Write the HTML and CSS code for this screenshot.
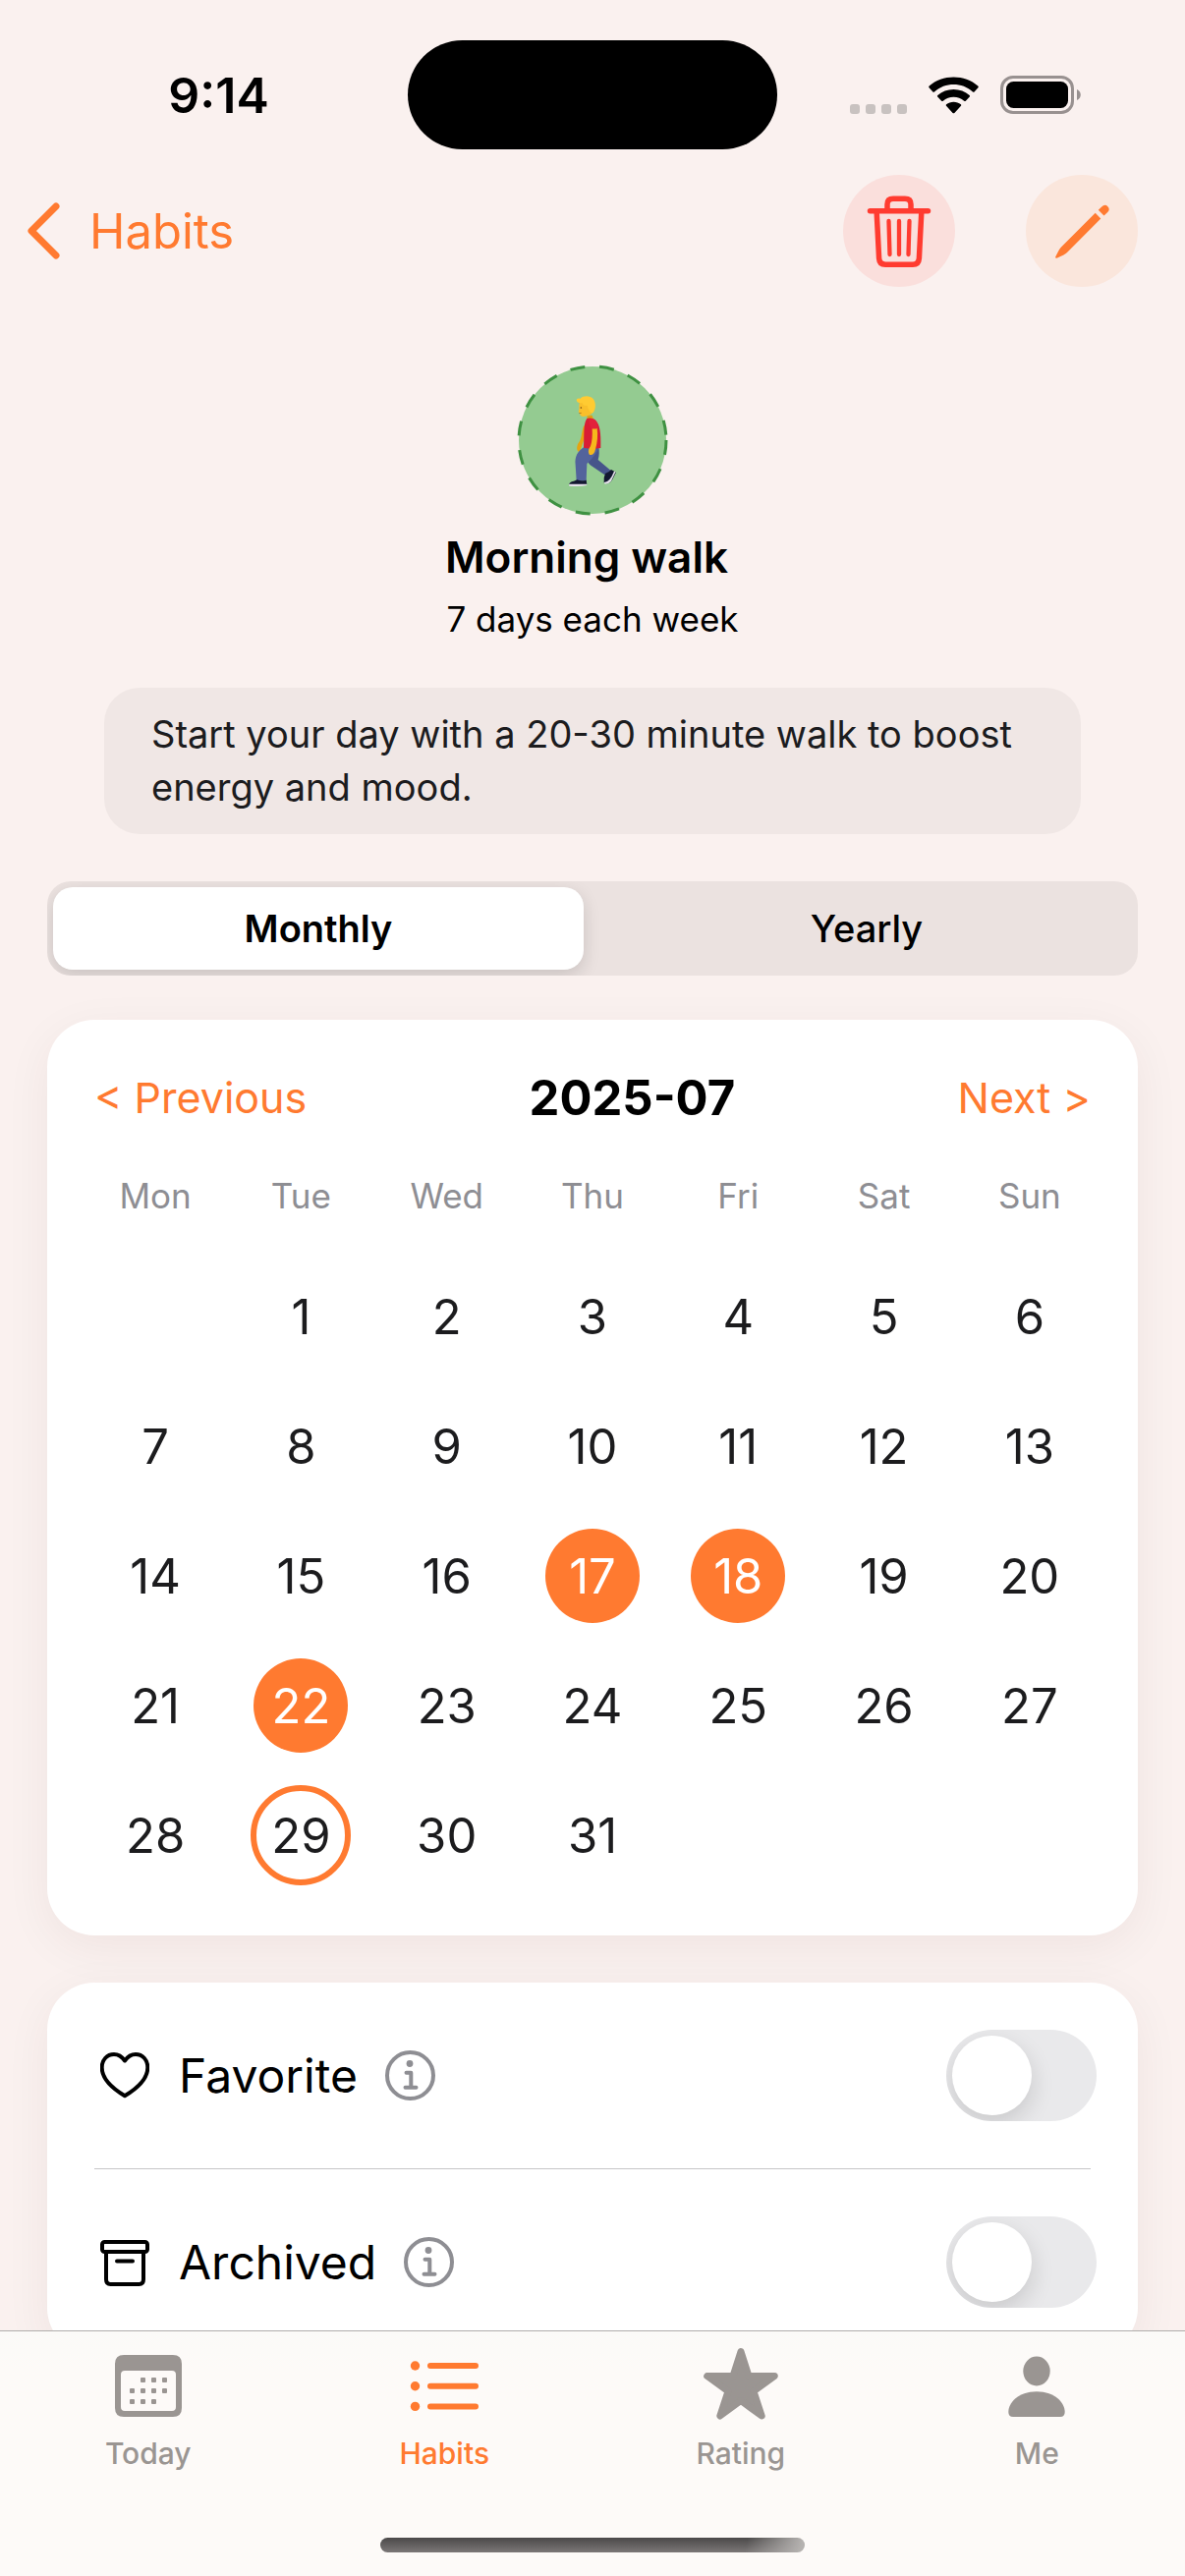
FILE: index.html
```html
<!DOCTYPE html>
<html lang="en">
<head>
<meta charset="utf-8">
<meta name="viewport" content="width=device-width, initial-scale=1">
<title>Morning walk</title>
<link rel="stylesheet" href="styles.css">
</head>
<body>
<div class="app">
  <header class="top">
    <div class="status">
      <span class="status-time">9:14</span>
      <span class="island"></span>
      <span class="status-icons">
        <svg class="signal" viewBox="0 0 58 38" width="58" height="38" aria-hidden="true">
          <g fill="#c8c2c0"><rect y="28" width="10" height="10" rx="3"/><rect x="16" y="28" width="10" height="10" rx="3"/><rect x="32" y="28" width="10" height="10" rx="3"/><rect x="48" y="28" width="10" height="10" rx="3"/></g>
        </svg>
        <svg viewBox="0 0 51 38" width="51" height="38" aria-hidden="true">
          <path d="M0.600 11.200 Q-.2 10.400.7 9.600 C7.500 3.300 16.200.5 25.500.5 C34.800.5 43.500 3.300 50.300 9.600 Q51.200 10.400 50.400 11.200 L46.600 15.400 Q45.800 16.100 45 15.400 C39.600 10.500 32.600 8 25.500 8 C18.400 8 11.400 10.500 6 15.400 Q5.200 16.100 4.400 15.400Z"/>
          <path d="M9.200 20.600 Q8.500 19.900 9.300 19.100 C13.600 15.200 19.300 13 25.500 13 C31.700 13 37.400 15.200 41.700 19.100 Q42.500 19.900 41.800 20.600 L37.800 24.700 Q37 25.400 36.200 24.700 C33.200 22.200 29.500 20.800 25.500 20.800 C21.500 20.800 17.800 22.200 14.800 24.700 Q14 25.400 13.200 24.700Z"/>
          <path d="M18 29.700 Q17.300 29 18.100 28.300 C20.100 26.600 22.700 25.700 25.500 25.700 C28.300 25.700 30.900 26.600 32.900 28.300 Q33.700 29 33 29.700 L26.400 36.900 Q25.500 37.600 24.600 36.900Z"/>
        </svg>
        <svg viewBox="0 0 82 39" width="82" height="39" aria-hidden="true">
          <rect x="1.500" y="1.500" width="72" height="36" rx="11.500" fill="none" stroke="#989190" stroke-width="3"/>
          <rect x="6" y="6" width="63" height="27" rx="7.500"/>
          <path d="M78 14 C83 16 83 23 78 25Z" fill="#989190"/>
        </svg>
      </span>
    </div>
    <nav class="nav">
      <a class="back" href="#habits">
        <svg viewBox="0 0 34 58" width="34" height="58" aria-hidden="true"><path d="M30 4 L5 29 L30 54" fill="none" stroke="currentColor" stroke-width="7" stroke-linecap="round" stroke-linejoin="round"/></svg>
        Habits
      </a>
      <div class="actions">
        <button class="round round-delete" type="button" aria-label="Delete">
          <svg viewBox="0 0 114 114" width="114" height="114" aria-hidden="true">
            <g fill="none" stroke="currentColor" stroke-linecap="round" stroke-linejoin="round">
              <path d="M27.500 36.700 H86.500" stroke-width="5.500"/>
              <path d="M45 35 V30 Q45 24.300 51 24.300 H63 Q69 24.300 69 30 V35" stroke-width="5.500"/>
              <path d="M34.200 38 L36.600 85 Q37 91.200 43 91.200 H71 Q77 91.200 77.400 85 L79.800 38" stroke-width="5.500"/>
              <path d="M46.500 47 L47.500 81 M57 47 V81 M67.500 47 L66.500 81" stroke-width="4.300"/>
            </g>
          </svg>
        </button>
        <button class="round round-edit" type="button" aria-label="Edit">
          <svg viewBox="0 0 114 114" width="114" height="114" aria-hidden="true">
            <g fill="currentColor">
              <path d="M70.700 38.800 L76.300 44.400 L42 79 Q40.500 80.500 38.500 81.400 L32 84.600 Q29.500 85.500 30.400 83 L33.500 77 Q34.400 75 36 73.500Z"/>
              <path d="M73.800 35.800 L77.200 32.400 Q80.500 29.300 83.400 32.200 Q86.300 35.100 83 38.200 L79.500 41.500Z"/>
            </g>
          </svg>
        </button>
      </div>
    </nav>
  </header>

  <main class="content">
    <section class="profile">
      <svg class="avatar" viewBox="0 0 150 150" width="150" height="150" role="img" aria-label="Person walking">
        <circle cx="75" cy="75" r="75" fill="#94cb91"/>
        <circle cx="75" cy="75" r="75" fill="none" stroke="#3f9142" stroke-width="3" stroke-dasharray="15 15"/>
        <g transform="translate(32 17) scale(.3333)">
          <path d="M103 128 C94 150 98 165 88 180 C80 190 80 205 86 209 C94 206 96 192 99 184 L112 150Z" fill="#e5a411"/>
          <path d="M108 195 C108 225 110 240 124 251 L166 280 L186 268 L146 234 C150 220 150 210 148 195Z" fill="#46548a"/>
          <path d="M168 276 Q162 288 164 304 Q180 312 190 294 L201 272 L186 264 Q180 272 168 276Z" fill="#121730"/>
          <path d="M165 306 Q174 312 186 299 L200 270 L195 269 Q182 302 165 303Z" fill="#e5e2ea"/>
          <path d="M104 194 C84 208 74 222 77 250 L80 297 L110 299 L112 246 C134 224 144 210 148 194Z" fill="#53639c"/>
          <path d="M57 310 Q57 302 72 299 L82 295 Q94 300 110 296 L112 310Z" fill="#121730"/>
          <path d="M57 308 H112 V312 Q90 317 58 314Z" fill="#e5e2ea"/>
          <path d="M113 98 H128 L133 113 Q122 118 112 112Z" fill="#e0a012"/>
          <path d="M112 108 Q124 103 137 112 C152 126 155 152 154 198 Q128 202 102 197 C104 160 100 124 112 108Z" fill="#d91c35"/>
          <path d="M128 138 C129 160 128 178 123 192 Q112 208 120 219 Q134 222 138 202 C144 180 146 158 143 137Z" fill="#f6b81c"/>
          <path d="M118 110 Q132 104 140 116 Q146 128 146 137 Q134 142 124 138 Q118 124 118 110Z" fill="#e2213b"/>
          <path d="M90 58 C86 70 90 76 87 84 Q84 89 90 91 Q90 103 103 102 Q128 100 134 82 L134 56Z" fill="#f9bf2b"/>
          <path d="M98 60 C86 63 78 56 81 49 Q84 45 92 47 C100 38 122 37 131 48 C141 60 139 80 131 90 Q123 94 120 85 Q112 76 114 68 C106 70 99 67 98 60Z" fill="#ffcb32"/>
          <circle cx="94" cy="75" r="2.500" fill="#6b4415"/>
          <path d="M88 92 L95 91" stroke="#9c5c12" stroke-width="2"/>
        </g>
      </svg>
      <h1 class="name">Morning walk</h1>
      <p class="frequency">7 days each week</p>
      <p class="description">Start your day with a 20-30 minute walk to boost energy and mood.</p>
    </section>

    <div class="segments" role="group" aria-label="Calendar range">
      <button class="segment segment-on" type="button" aria-pressed="true">Monthly</button>
      <button class="segment" type="button" aria-pressed="false">Yearly</button>
    </div>

    <section class="card calendar">
      <div class="month-bar">
        <button class="month-step" type="button">&lt; Previous</button>
        <h2 class="month">2025-07</h2>
        <button class="month-step" type="button">Next &gt;</button>
      </div>
      <table class="days">
        <thead>
          <tr><th scope="col">Mon</th><th scope="col">Tue</th><th scope="col">Wed</th><th scope="col">Thu</th><th scope="col">Fri</th><th scope="col">Sat</th><th scope="col">Sun</th></tr>
        </thead>
        <tbody>
          <tr><td></td><td><button class="day" type="button">1</button></td><td><button class="day" type="button">2</button></td><td><button class="day" type="button">3</button></td><td><button class="day" type="button">4</button></td><td><button class="day" type="button">5</button></td><td><button class="day" type="button">6</button></td></tr>
          <tr><td><button class="day" type="button">7</button></td><td><button class="day" type="button">8</button></td><td><button class="day" type="button">9</button></td><td><button class="day" type="button">10</button></td><td><button class="day" type="button">11</button></td><td><button class="day" type="button">12</button></td><td><button class="day" type="button">13</button></td></tr>
          <tr><td><button class="day" type="button">14</button></td><td><button class="day" type="button">15</button></td><td><button class="day" type="button">16</button></td><td><button class="day day-done" type="button">17</button></td><td><button class="day day-done" type="button">18</button></td><td><button class="day" type="button">19</button></td><td><button class="day" type="button">20</button></td></tr>
          <tr><td><button class="day" type="button">21</button></td><td><button class="day day-done" type="button">22</button></td><td><button class="day" type="button">23</button></td><td><button class="day" type="button">24</button></td><td><button class="day" type="button">25</button></td><td><button class="day" type="button">26</button></td><td><button class="day" type="button">27</button></td></tr>
          <tr><td><button class="day" type="button">28</button></td><td><button class="day day-today" type="button" aria-current="date">29</button></td><td><button class="day" type="button">30</button></td><td><button class="day" type="button">31</button></td><td></td><td></td><td></td></tr>
        </tbody>
      </table>
    </section>

    <section class="card options">
      <div class="option">
        <label class="option-label" for="favorite">
          <svg viewBox="0 0 50 50" width="50" height="50" aria-hidden="true"><path d="M25 9.500 C21.500 4.500 17.500 3 14 3 C7 3 1.700 8.500 1.700 16.500 C1.700 27 12 37.500 25 45.300 C38 37.500 48.300 27 48.300 16.500 C48.300 8.500 43 3 36 3 C32.500 3 28.500 4.500 25 9.500Z" fill="none" stroke="#000" stroke-width="4" stroke-linejoin="round"/></svg>
          Favorite
        </label>
        <button class="info" type="button" aria-label="About favorites">
          <svg viewBox="0 0 51 51" width="51" height="51" aria-hidden="true"><circle cx="25.500" cy="25.500" r="23.500" fill="none" stroke="currentColor" stroke-width="4"/><circle cx="25" cy="13.500" r="3.400" fill="currentColor"/><path d="M21.500 22.700 H26.300 V37.500 M20.500 37.700 H31.500" fill="none" stroke="currentColor" stroke-width="4" stroke-linecap="round" stroke-linejoin="round"/></svg>
        </button>
        <input class="switch" type="checkbox" role="switch" id="favorite">
      </div>
      <hr class="divider">
      <div class="option">
        <label class="option-label" for="archived">
          <svg viewBox="0 0 50 50" width="50" height="50" aria-hidden="true"><g fill="none" stroke="#000" stroke-width="4" stroke-linecap="round"><rect x="2" y="4" width="46" height="10" rx="2.500"/><path d="M6 15 V42 Q6 47 10.500 47 H39.500 Q44 47 44 42 V15"/><path d="M17 23.500 H33"/></g></svg>
          Archived
        </label>
        <button class="info" type="button" aria-label="About archiving">
          <svg viewBox="0 0 51 51" width="51" height="51" aria-hidden="true"><circle cx="25.500" cy="25.500" r="23.500" fill="none" stroke="currentColor" stroke-width="4"/><circle cx="25" cy="13.500" r="3.400" fill="currentColor"/><path d="M21.500 22.700 H26.300 V37.500 M20.500 37.700 H31.500" fill="none" stroke="currentColor" stroke-width="4" stroke-linecap="round" stroke-linejoin="round"/></svg>
        </button>
        <input class="switch" type="checkbox" role="switch" id="archived">
      </div>
    </section>
  </main>

  <footer class="dock">
    <nav class="tabs">
      <a class="tab" href="#today">
        <svg viewBox="0 0 78 78" width="78" height="78" aria-hidden="true"><path fill="currentColor" fill-rule="evenodd" d="M14 8 H64 Q73 8 73 17 V62 Q73 71 64 71 H14 Q5 71 5 62 V17 Q5 8 14 8Z M15 24 Q11 24 11 28 V61 Q11 65 15 65 H63 Q67 65 67 61 V28 Q67 24 63 24Z"/><g fill="currentColor"><rect x="31" y="31" width="5" height="5" rx="1"/><rect x="42" y="31" width="5" height="5" rx="1"/><rect x="53" y="31" width="5" height="5" rx="1"/><rect x="20" y="42" width="5" height="5" rx="1"/><rect x="31" y="42" width="5" height="5" rx="1"/><rect x="42" y="42" width="5" height="5" rx="1"/><rect x="53" y="42" width="5" height="5" rx="1"/><rect x="20" y="53" width="5" height="5" rx="1"/><rect x="31" y="53" width="5" height="5" rx="1"/><rect x="42" y="53" width="5" height="5" rx="1"/></g></svg>
        Today
      </a>
      <a class="tab tab-on" href="#habits" aria-current="page">
        <svg viewBox="0 0 78 78" width="78" height="78" aria-hidden="true"><g fill="currentColor"><circle cx="9.500" cy="19" r="4.700"/><circle cx="9.500" cy="39.700" r="4.700"/><circle cx="9.500" cy="60.400" r="4.700"/></g><path d="M25 19 H71 M25 39.700 H71 M25 60.400 H71" stroke="currentColor" stroke-width="6" stroke-linecap="round"/></svg>
        Habits
      </a>
      <a class="tab" href="#rating">
        <svg viewBox="0 0 78 78" width="78" height="78" aria-hidden="true"><path fill="currentColor" stroke="currentColor" stroke-width="7" stroke-linejoin="round" d="M39 4.500 L47 29.500 H73.300 L52 45 L60.200 70 L39 54.500 L17.800 70 L26 45 L4.700 29.500 H31Z"/></svg>
        Rating
      </a>
      <a class="tab" href="#me">
        <svg viewBox="0 0 78 78" width="78" height="78" aria-hidden="true"><g fill="currentColor"><ellipse cx="39" cy="24.500" rx="13.700" ry="15"/><path d="M10.300 66 C10.300 57 20 45.300 39 45.300 C58 45.300 67.700 57 67.700 66 Q67.700 71 63 71 H15 Q10.300 71 10.300 66Z"/></g></svg>
        Me
      </a>
    </nav>
    <span class="home-indicator"></span>
  </footer>
</div>
</body>
</html>
```

FILE: styles.css
```css
:root {
  --accent: #ff7a30;
  --page: #faf1ef;
  --muted: #8e8e93;
}

* {
  box-sizing: border-box;
}

body {
  margin: 0;
  background: var(--page);
  color: #000;
  font-family: Inter, "Liberation Sans", sans-serif;
}

h1, h2, p {
  margin: 0;
}

button {
  padding: 0;
  border: 0;
  background: none;
  color: inherit;
  font: inherit;
  cursor: pointer;
}

a {
  color: inherit;
  text-decoration: none;
}

svg {
  display: block;
  flex: none;
}

.app {
  display: flex;
  flex-direction: column;
  height: 100vh;
}

/* Status bar and navigation */

.top {
  flex: none;
}

.status {
  display: grid;
  grid-template-columns: 1fr 376px 1fr;
  align-items: center;
  padding-top: 41px;
}

.status-time {
  padding-left: 30px;
  font-size: 50px;
  font-weight: 600;
  text-align: center;
}

.island {
  height: 111px;
  border-radius: 56px;
  background: #000;
}

.status-icons {
  display: flex;
  align-items: center;
  justify-content: center;
  gap: 22px;
  padding-right: 32px;
}

.nav {
  display: flex;
  align-items: center;
  justify-content: space-between;
  padding: 26px 48px 0 27px;
}

.back {
  display: flex;
  align-items: center;
  gap: 30px;
  color: var(--accent);
  font-size: 49px;
}

.actions {
  display: flex;
  gap: 72px;
}

.round {
  border-radius: 50%;
}

.round-delete {
  background: #fadfdc;
  color: #ff3b30;
}

.round-edit {
  background: #fae6dc;
  color: var(--accent);
}

/* Scrolling content */

.content {
  flex: 1;
  min-height: 0;
  padding: 81px 48px 48px;
  overflow-y: auto;
  scrollbar-width: none;
}

.profile {
  display: flex;
  flex-direction: column;
  align-items: center;
}

.avatar {
  overflow: visible;
}

.name {
  margin-top: 17px;
  padding-right: 12px;
  font-size: 44px;
  font-weight: 600;
  line-height: 54px;
}

.frequency {
  margin-top: 14px;
  font-size: 35px;
  line-height: 44px;
}

.description {
  align-self: stretch;
  margin: 48px 58px 0;
  padding: 20px 48px 21px;
  border-radius: 36px;
  background: #f0e7e5;
  color: #1c1c1e;
  font-size: 38px;
  line-height: 54px;
}

.segments {
  display: grid;
  grid-template-columns: 1fr 1fr;
  margin-top: 48px;
  padding: 6px 0 6px 6px;
  border-radius: 24px;
  background: #ebe2e0;
  overflow: hidden;
}

.segment {
  height: 84px;
  border-radius: 20px;
  font-size: 38px;
  font-weight: 500;
}

.segment-on {
  margin-right: 12px;
  background: #fff;
  box-shadow: 0 6px 18px rgba(0, 0, 0, 0.14);
  font-weight: 600;
}

.card {
  border-radius: 48px;
  background: #fff;
  box-shadow: 0 12px 48px rgba(60, 20, 10, 0.06);
}

.calendar {
  margin-top: 45px;
  padding: 48px 36px 36px;
}

.month-bar {
  display: flex;
  align-items: center;
  justify-content: space-between;
  height: 62px;
  margin: 0 12px 12px;
}

.month-step {
  color: var(--accent);
  font-size: 43px;
}

.month {
  font-size: 49px;
  font-weight: 700;
}

.days {
  width: 100%;
  table-layout: fixed;
  border-collapse: collapse;
}

.days th {
  height: 114px;
  padding: 0;
  color: var(--muted);
  font-size: 35px;
  font-weight: 400;
}

.days td {
  height: 132px;
  padding: 0;
  text-align: center;
}

.day {
  width: 96px;
  height: 96px;
  border-radius: 50%;
  color: #1c1c1e;
  font-size: 49px;
  vertical-align: middle;
}

.day-done {
  background: var(--accent);
  color: #fff;
}

.day-today {
  width: 102px;
  height: 102px;
  border: 6px solid var(--accent);
}

.options {
  margin-top: 48px;
  padding: 0 42px 0 48px;
}

.option {
  display: flex;
  align-items: center;
  padding: 48px 0;
}

.divider {
  height: 1px;
  margin: 0 6px 0 0;
  border: 0;
  background: #c6c6c8;
}

.option-label {
  display: flex;
  align-items: center;
  gap: 30px;
  padding-left: 6px;
  font-size: 48px;
}

.info {
  margin-left: 28px;
  color: var(--muted);
}

.switch {
  width: 153px;
  height: 93px;
  margin: 0 0 0 auto;
  padding: 6px;
  border-radius: 47px;
  background: #e9e9eb;
  appearance: none;
  overflow: hidden;
}

.switch::before {
  content: "";
  display: block;
  width: 81px;
  height: 81px;
  border-radius: 50%;
  background: #fff;
  box-shadow: 0 9px 24px rgba(0, 0, 0, 0.14);
}

.switch:checked {
  background: var(--accent);
}

.switch:checked::before {
  margin-left: auto;
}

/* Tab bar */

.dock {
  flex: none;
  display: flex;
  flex-direction: column;
  align-items: center;
  height: 250px;
  padding-bottom: 24px;
  border-top: 1px solid #b0adac;
  background: linear-gradient(#fbfaf8, #fdfaf8 40px);
}

.tabs {
  display: grid;
  grid-template-columns: repeat(4, 1fr);
  width: 100%;
  padding-top: 16px;
}

.tab {
  display: flex;
  flex-direction: column;
  align-items: center;
  gap: 12px;
  color: #9a9592;
  font-size: 30px;
  font-weight: 500;
  line-height: 36px;
}

.tab-on {
  color: var(--accent);
}

.home-indicator {
  width: 432px;
  height: 15px;
  margin-top: auto;
  border-radius: 8px;
  background:
    linear-gradient(100deg, transparent 86%, #b5b2b0 99%),
    linear-gradient(#4b4949, #7b7777);
}
```
